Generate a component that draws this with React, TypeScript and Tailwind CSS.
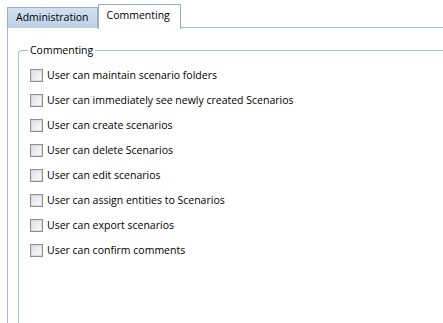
const permissions = [
  'User can maintain scenario folders',
  'User can immediately see newly created Scenarios',
  'User can create scenarios',
  'User can delete Scenarios',
  'User can edit scenarios',
  'User can assign entities to Scenarios',
  'User can export scenarios',
  'User can confirm comments',
];

function CheckBox() {
  return (
    <span className="flex h-[13px] w-[13px] shrink-0 items-center justify-center border border-[#8e8f8f] bg-white">
      <span className="h-[11px] w-[11px] border border-[#dcdcdc] bg-gradient-to-br from-[#e0e0e0] to-[#fbfbfb]" />
    </span>
  );
}

export default function App() {
  return (
    <div
      className="h-[323px] w-[443px] overflow-hidden bg-white text-[10.5px] text-black"
      style={{ fontFamily: '"Open Sans", "Liberation Sans", sans-serif' }}
    >
      {/* tab strip */}
      <div className="flex h-[28px] items-end pl-[7px]">
        <div className="flex h-[21px] items-center border border-b-0 border-[#9aaecb] bg-gradient-to-b from-[#d2e1f0] to-[#bcd0e6] px-[8px]">
          Administration
        </div>
        <div className="relative -mb-px flex h-[25px] items-center border border-b-0 border-[#9aaecb] bg-white pb-[2px] pl-[8px] pr-[10px]">
          Commenting
        </div>
        <div className="h-px flex-1 bg-[#a3b9d6]" />
      </div>

      {/* tab page */}
      <div className="ml-[7px] h-[295px] border-l border-[#a3b9d6] pl-[10px] pt-[16px]">
        <fieldset className="h-[300px] rounded-tl-[4px] border border-r-0 border-b-0 border-[#a9bcd5]">
          <legend className="ml-[9px] px-[2px] leading-[13px]">Commenting</legend>
          <div className="flex flex-col gap-[9px] pl-[11px] pt-[10px]">
            {permissions.map((p) => (
              <label key={p} className="flex h-[16px] items-center gap-[4px]">
                <CheckBox />
                <span className="leading-[16px]">{p}</span>
              </label>
            ))}
          </div>
        </fieldset>
      </div>
    </div>
  );
}
